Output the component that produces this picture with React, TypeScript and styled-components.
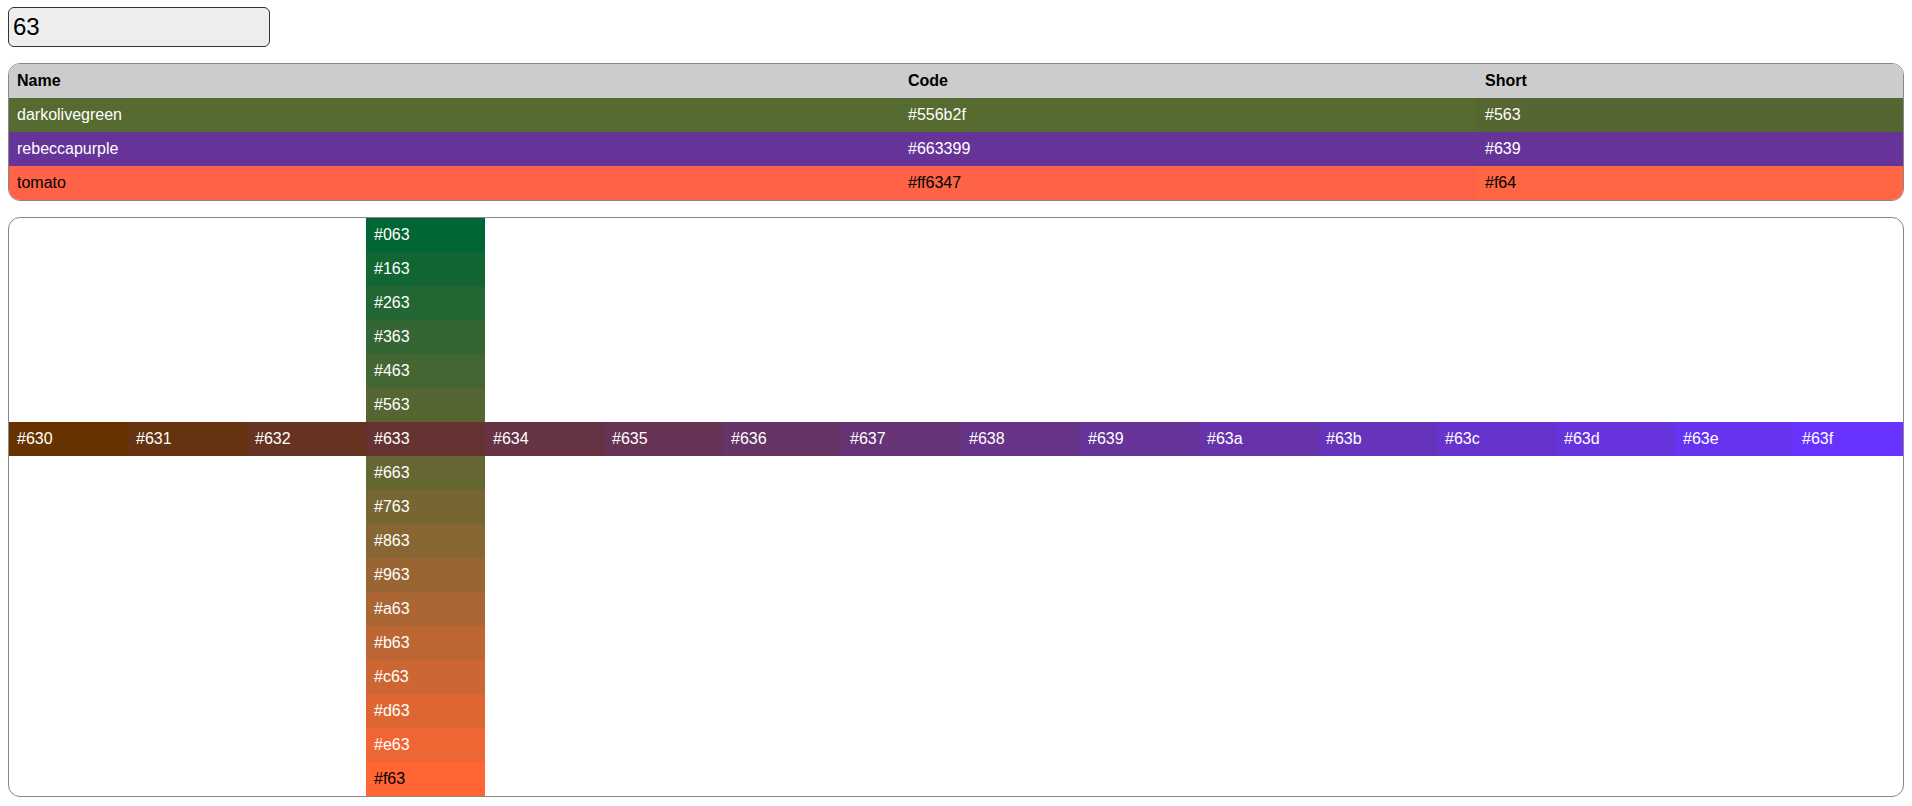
import React, { useState } from "react";
import styled, { createGlobalStyle } from "styled-components";

const GlobalStyle = createGlobalStyle`
  html, body { margin: 0; padding: 0; background: #fff; }
  body { font-family: "Liberation Sans", Arial, Helvetica, sans-serif; font-size: 16px; }
  * { box-sizing: border-box; }
`;

const Page = styled.div`
  display: flex;
  flex-direction: column;
  align-items: flex-start;
  gap: 16px;
  padding: 7px 8px 8px;
`;

const SearchInput = styled.input`
  width: 262px;
  height: 40px;
  padding: 4px 4px;
  font-family: "Liberation Sans", Arial, sans-serif;
  font-size: 24px;
  color: #000;
  background: #eee;
  border: 1px solid #333;
  border-radius: 6px;
  outline: none;
`;

const TableFrame = styled.div`
  align-self: stretch;
  border: 1px solid #888;
  border-radius: 12px;
  overflow: hidden;
`;

const Table = styled.table`
  width: 100%;
  border-collapse: collapse;
  border-spacing: 0;
  table-layout: fixed;
`;

const HeadCell = styled.th<{ $w?: number }>`
  ${(p) => (p.$w ? `width: ${p.$w}px;` : "")}
  background: #ccc;
  text-align: left;
  font-weight: bold;
  padding: 8px;
  line-height: 18px;
  color: #000;
`;

const Cell = styled.td<{ $bg: string; $fg: string }>`
  background: ${(p) => p.$bg};
  color: ${(p) => p.$fg};
  padding: 8px;
  line-height: 18px;
`;

const GridFrame = styled.div`
  align-self: stretch;
  border: 1px solid #888;
  border-radius: 12px;
  overflow: hidden;
`;

const Grid = styled.div`
  display: grid;
  grid-template-columns: repeat(16, 119px);
  grid-template-rows: repeat(17, 34px);
`;

const Swatch = styled.div<{ $bg: string; $fg: string }>`
  background: ${(p) => p.$bg};
  color: ${(p) => p.$fg};
  padding: 8px;
  line-height: 18px;
  white-space: nowrap;
`;

const Empty = styled.div``;

const HEX = "0123456789abcdef";

function expand(short: string) {
  return "#" + short.slice(1).split("").map((c) => c + c).join("");
}

function textColor(hex: string) {
  const h = hex.length === 4 ? expand(hex) : hex;
  const r = parseInt(h.slice(1, 3), 16);
  const g = parseInt(h.slice(3, 5), 16);
  const b = parseInt(h.slice(5, 7), 16);
  const y = (r * 299 + g * 587 + b * 114) / 1000;
  return y >= 140 ? "#000" : "#fff";
}

const named = [
  { name: "darkolivegreen", code: "#556b2f", short: "#563" },
  { name: "rebeccapurple", code: "#663399", short: "#639" },
  { name: "tomato", code: "#ff6347", short: "#f64" },
];

export default function App() {
  const [q, setQ] = useState("63");
  const cells: React.ReactNode[] = [];
  for (let row = 0; row < 17; row++) {
    for (let col = 0; col < 16; col++) {
      let code: string | null = null;
      if (row === 6) code = "#63" + HEX[col];
      else if (col === 3) {
        const idx = row < 6 ? row : row - 1;
        code = "#" + HEX[idx] + "63";
      }
      if (code) {
        cells.push(
          <Swatch key={`${row}-${col}`} $bg={expand(code)} $fg={textColor(code)}>
            {code}
          </Swatch>
        );
      } else {
        cells.push(<Empty key={`${row}-${col}`} />);
      }
    }
  }
  return (
    <>
      <GlobalStyle />
      <Page>
        <SearchInput value={q} onChange={(e) => setQ(e.target.value)} />
        <TableFrame>
          <Table>
            <thead>
              <tr>
                <HeadCell $w={891}>Name</HeadCell>
                <HeadCell $w={577}>Code</HeadCell>
                <HeadCell>Short</HeadCell>
              </tr>
            </thead>
            <tbody>
              {named.map((n) => (
                <tr key={n.name}>
                  <Cell $bg={n.code} $fg={textColor(n.code)}>{n.name}</Cell>
                  <Cell $bg={n.code} $fg={textColor(n.code)}>{n.code}</Cell>
                  <Cell $bg={expand(n.short)} $fg={textColor(n.short)}>{n.short}</Cell>
                </tr>
              ))}
            </tbody>
          </Table>
        </TableFrame>
        <GridFrame>
          <Grid>{cells}</Grid>
        </GridFrame>
      </Page>
    </>
  );
}
